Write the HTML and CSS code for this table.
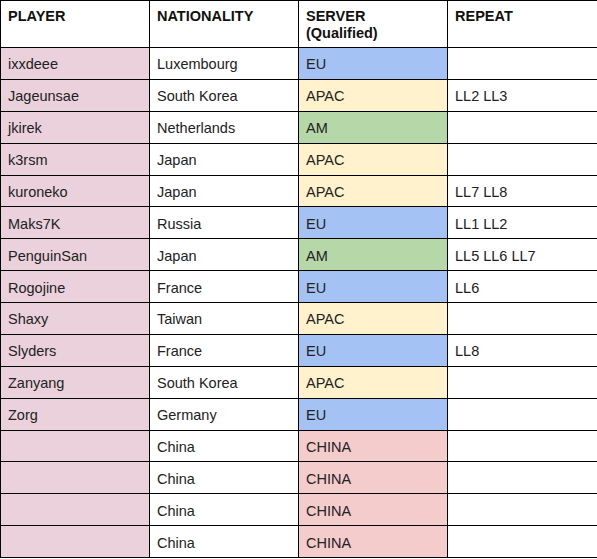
FILE: index.html
```html
<!DOCTYPE html>
<html>
<head>
<meta charset="utf-8">
<link rel="stylesheet" href="styles.css">
</head>
<body>
<table class="sheet">
  <colgroup><col class="c"><col class="c"><col class="c"><col class="c-last"></colgroup>
  <thead>
    <tr class="head">
      <th>PLAYER</th><th>NATIONALITY</th><th>SERVER<br>(Qualified)</th><th>REPEAT</th>
    </tr>
  </thead>
  <tbody>
    <tr><td class="pink">ixxdeee</td><td>Luxembourg</td><td class="eu">EU</td><td></td></tr>
    <tr><td class="pink">Jageunsae</td><td>South Korea</td><td class="apac">APAC</td><td>LL2 LL3</td></tr>
    <tr><td class="pink">jkirek</td><td>Netherlands</td><td class="am">AM</td><td></td></tr>
    <tr><td class="pink">k3rsm</td><td>Japan</td><td class="apac">APAC</td><td></td></tr>
    <tr><td class="pink">kuroneko</td><td>Japan</td><td class="apac">APAC</td><td>LL7 LL8</td></tr>
    <tr><td class="pink">Maks7K</td><td>Russia</td><td class="eu">EU</td><td>LL1 LL2</td></tr>
    <tr><td class="pink">PenguinSan</td><td>Japan</td><td class="am">AM</td><td>LL5 LL6 LL7</td></tr>
    <tr><td class="pink">Rogojine</td><td>France</td><td class="eu">EU</td><td>LL6</td></tr>
    <tr><td class="pink">Shaxy</td><td>Taiwan</td><td class="apac">APAC</td><td></td></tr>
    <tr><td class="pink">Slyders</td><td>France</td><td class="eu">EU</td><td>LL8</td></tr>
    <tr><td class="pink">Zanyang</td><td>South Korea</td><td class="apac">APAC</td><td></td></tr>
    <tr><td class="pink">Zorg</td><td>Germany</td><td class="eu">EU</td><td></td></tr>
    <tr><td class="pink"></td><td>China</td><td class="china">CHINA</td><td></td></tr>
    <tr><td class="pink"></td><td>China</td><td class="china">CHINA</td><td></td></tr>
    <tr><td class="pink"></td><td>China</td><td class="china">CHINA</td><td></td></tr>
    <tr><td class="pink"></td><td>China</td><td class="china">CHINA</td><td></td></tr>
  </tbody>
</table>
</body>
</html>
```
FILE: styles.css
```css
html, body {
  margin: 0;
  padding: 0;
  background: #ffffff;
}
.sheet {
  border-collapse: collapse;
  table-layout: fixed;
  width: 597px;
  font-family: "Liberation Sans", Arial, sans-serif;
  font-size: 14.5px;
  color: #222222;
}
.c { width: 149px; }
.c-last { width: 150px; }
.sheet th, .sheet td {
  border: 1px solid #000000;
  padding: 0 7px;
  text-align: left;
  white-space: nowrap;
}
.sheet th {
  font-weight: bold;
  vertical-align: top;
  height: 47px;
  padding-top: 7px;
  line-height: 17px;
  box-sizing: border-box;
  color: #111111;
}
.sheet td {
  height: 27.875px;
  vertical-align: middle;
  line-height: 17px;
  padding-top: 3px;
}
.pink { background: #ead1dc; }
.eu { background: #a4c2f4; }
.apac { background: #fff2cc; }
.am { background: #b6d7a8; }
.china { background: #f4cccc; }
```
